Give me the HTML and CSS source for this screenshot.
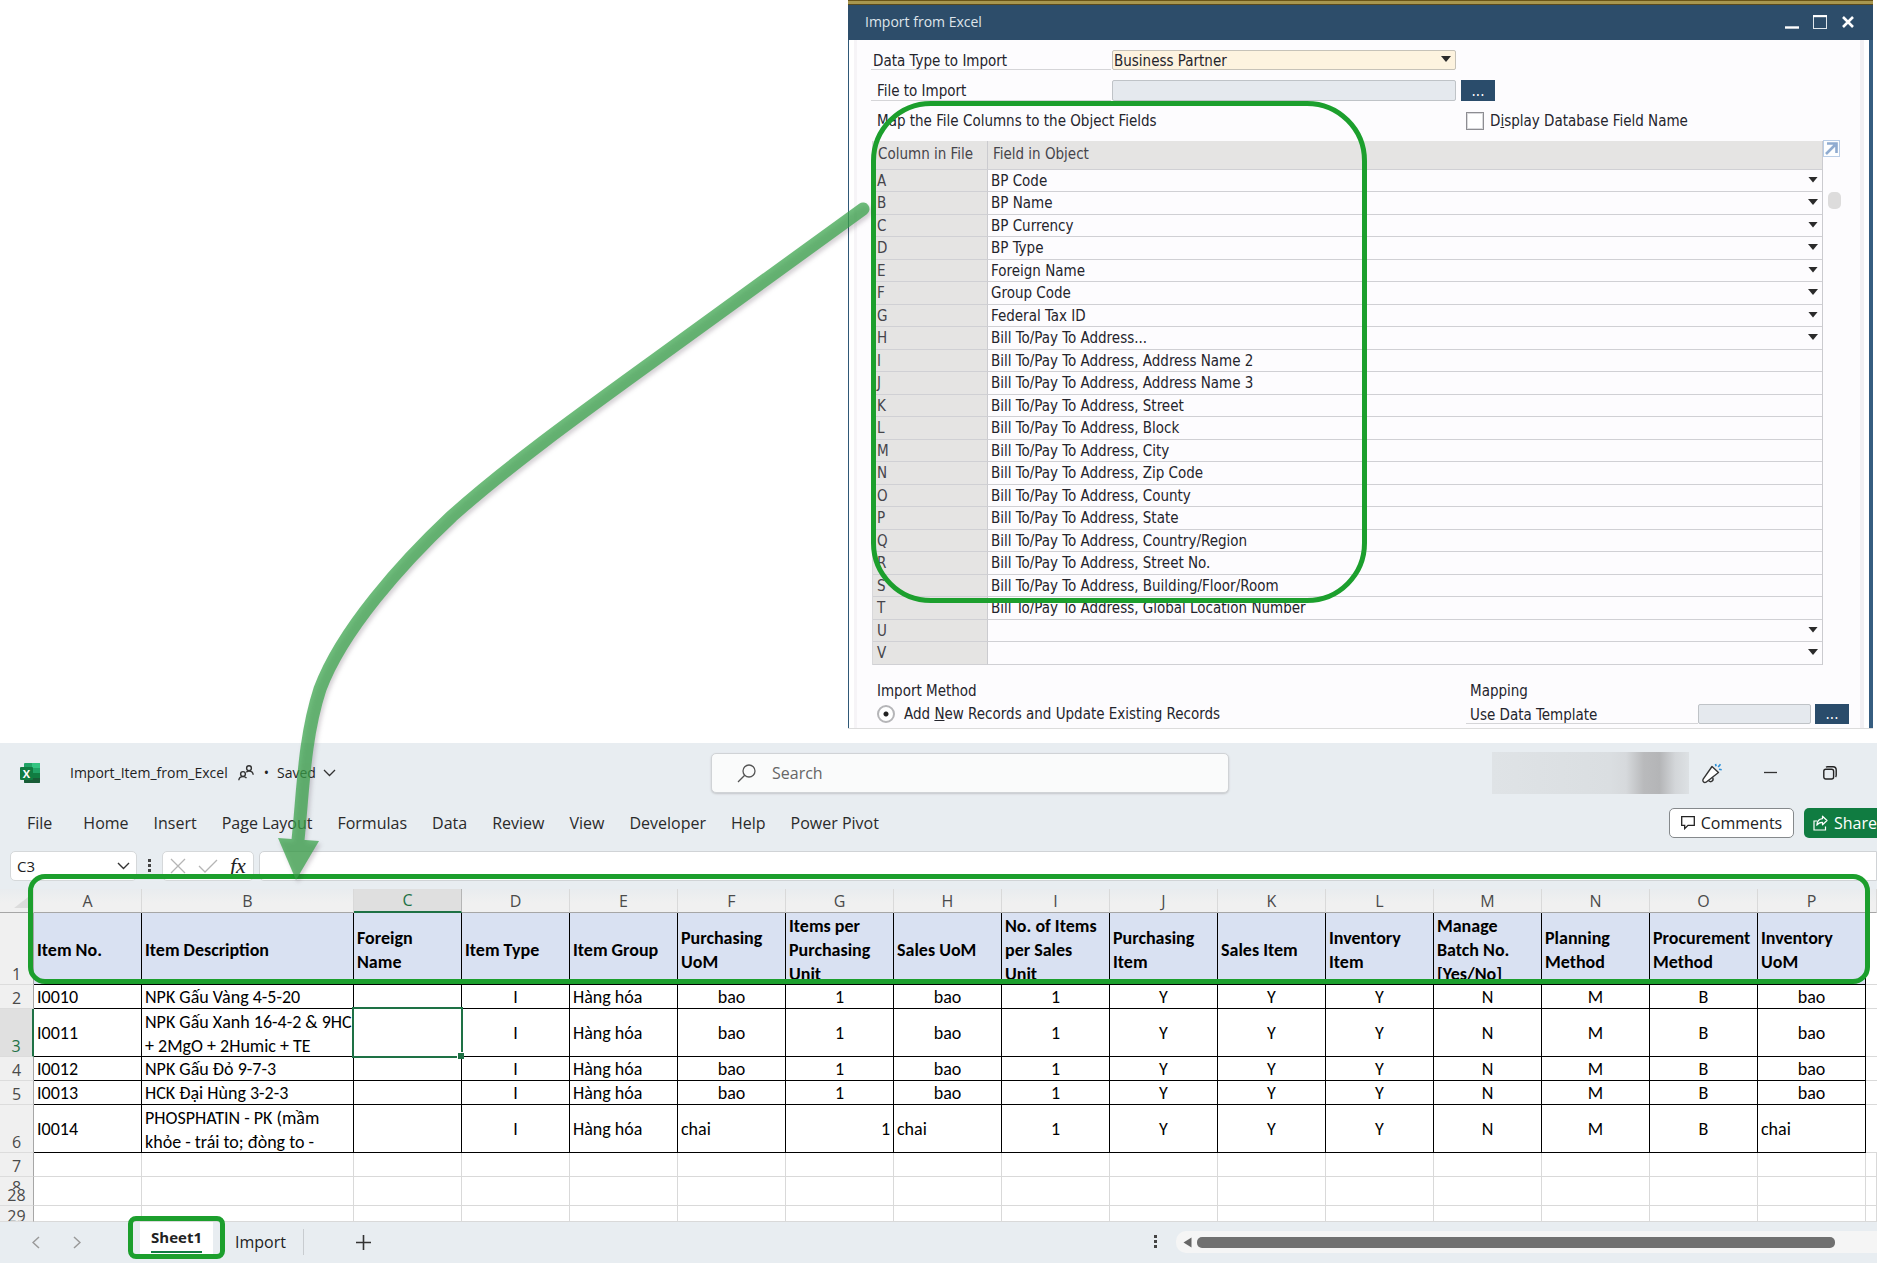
FILE: index.html
```html
<!DOCTYPE html>
<html lang="en">
<head>
<meta charset="utf-8">
<title>Import from Excel</title>
<link rel="stylesheet" href="styles.css">
</head>
<body>
<main class="page">

<section class="dialog">
  <header class="dialog-title">
    <h1>Import from Excel</h1>
    <div class="dialog-controls">
      <button type="button" aria-label="Minimize"><svg width="14" height="14" viewBox="0 0 14 14"><path d="M0 12.5h14" stroke="#fff" stroke-width="2.4"/></svg></button>
      <button type="button" aria-label="Maximize"><svg width="14" height="14" viewBox="0 0 14 14"><rect x=".5" y=".5" width="13" height="13" fill="none" stroke="#dfe6ec"/><path d="M0 1.2h14" stroke="#fff" stroke-width="2"/></svg></button>
      <button type="button" aria-label="Close"><svg width="14" height="14" viewBox="0 0 14 14"><path d="M2 2l10 10M12 2L2 12" stroke="#fff" stroke-width="2.6"/></svg></button>
    </div>
  </header>
  <div class="dialog-body">
    <div class="form-row">
      <label class="lined" for="dtype">Data Type to Import</label>
      <span class="pick boxed"><select id="dtype"><option>Business Partner</option></select><i class="caret"></i></span>
    </div>
    <div class="form-row file-row">
      <label class="lined inset" for="file">File to Import</label>
      <input class="field" id="file" type="text">
      <button class="more" type="button" aria-label="Browse file">...</button>
    </div>
    <div class="split">
      <h2>Map the File Columns to the Object Fields</h2>
      <label class="check"><input type="checkbox"><span>D<u>i</u>splay Database Field Name</span></label>
    </div>
    <div class="map-area">
      <table class="map">
        <colgroup><col class="col-file"><col></colgroup>
        <thead><tr><th>Column in File</th><th>Field in Object</th></tr></thead>
        <tbody>
          <tr><th>A</th><td><span class="pick"><select aria-label="Field A"><option>BP Code</option></select><i class="caret"></i></span></td></tr>
          <tr><th>B</th><td><span class="pick"><select aria-label="Field B"><option>BP Name</option></select><i class="caret"></i></span></td></tr>
          <tr><th>C</th><td><span class="pick"><select aria-label="Field C"><option>BP Currency</option></select><i class="caret"></i></span></td></tr>
          <tr><th>D</th><td><span class="pick"><select aria-label="Field D"><option>BP Type</option></select><i class="caret"></i></span></td></tr>
          <tr><th>E</th><td><span class="pick"><select aria-label="Field E"><option>Foreign Name</option></select><i class="caret"></i></span></td></tr>
          <tr><th>F</th><td><span class="pick"><select aria-label="Field F"><option>Group Code</option></select><i class="caret"></i></span></td></tr>
          <tr><th>G</th><td><span class="pick"><select aria-label="Field G"><option>Federal Tax ID</option></select><i class="caret"></i></span></td></tr>
          <tr><th>H</th><td><span class="pick"><select aria-label="Field H"><option>Bill To/Pay To Address...</option></select><i class="caret"></i></span></td></tr>
          <tr><th>I</th><td>Bill To/Pay To Address, Address Name 2</td></tr>
          <tr><th>J</th><td>Bill To/Pay To Address, Address Name 3</td></tr>
          <tr><th>K</th><td>Bill To/Pay To Address, Street</td></tr>
          <tr><th>L</th><td>Bill To/Pay To Address, Block</td></tr>
          <tr><th>M</th><td>Bill To/Pay To Address, City</td></tr>
          <tr><th>N</th><td>Bill To/Pay To Address, Zip Code</td></tr>
          <tr><th>O</th><td>Bill To/Pay To Address, County</td></tr>
          <tr><th>P</th><td>Bill To/Pay To Address, State</td></tr>
          <tr><th>Q</th><td>Bill To/Pay To Address, Country/Region</td></tr>
          <tr><th>R</th><td>Bill To/Pay To Address, Street No.</td></tr>
          <tr><th>S</th><td>Bill To/Pay To Address, Building/Floor/Room</td></tr>
          <tr><th>T</th><td>Bill To/Pay To Address, Global Location Number</td></tr>
          <tr><th>U</th><td><span class="pick"><select aria-label="Field U"><option></option></select><i class="caret"></i></span></td></tr>
          <tr><th>V</th><td><span class="pick"><select aria-label="Field V"><option></option></select><i class="caret"></i></span></td></tr>
        </tbody>
      </table>
      <div class="map-side">
        <button class="expand" type="button" aria-label="Expand table"><svg width="17" height="17" viewBox="0 0 17 17"><rect x=".5" y=".5" width="16" height="16" fill="#fdfeff" stroke="#b9cde6"/><path d="M3 14L12 5M4 3.500H13.500V13" fill="none" stroke="#8fabd0" stroke-width="2.6"/></svg></button>
        <div class="map-thumb"></div>
      </div>
    </div>
    <div class="split footer">
      <div class="method">
        <h2>Import Method</h2>
        <label class="radio"><input type="radio" name="method" checked><span>Add <u>N</u>ew Records and Update Existing Records</span></label>
      </div>
      <div class="mapping">
        <h2>Mapping</h2>
        <div class="template-row">
          <label class="lined" for="tpl">Use Data Template</label>
          <input class="field" id="tpl" type="text">
          <button class="more" type="button" aria-label="Browse template">...</button>
        </div>
      </div>
    </div>
  </div>
</section>

<section class="excel">
  <header class="titlebar">
    <div class="doc">
      <svg class="logo" width="20" height="20" viewBox="0 0 20 20"><rect x="4" width="16" height="20" rx="1" fill="#21a366"/><path d="M12 0h7a1 1 0 011 1v4h-8z" fill="#33c481"/><path d="M4 10h8v5H4z" fill="#185c37"/><path d="M12 5h8v5h-8z" fill="#21a366"/><path d="M12 10h8v5h-8z" fill="#107c41"/><path d="M4 15h16v4a1 1 0 01-1 1H5a1 1 0 01-1-1z" fill="#185c37"/><rect y="4" width="13" height="13" rx="1" fill="#107c41"/><text x="6.500" y="14.500" text-anchor="middle" font-family="Open Sans, sans-serif" font-weight="700" font-size="11" fill="#fff">X</text></svg>
      <span class="doc-name">Import_Item_from_Excel</span>
      <svg width="16" height="16" viewBox="0 0 16 16" fill="none" stroke="#333" stroke-width="1.400"><circle cx="5" cy="9" r="2.400"/><path d="M.8 15.300c.2-2.600 1.800-3.700 4.200-3.700 1.600 0 2.800.5 3.500 1.600"/><circle cx="11" cy="3.200" r="2.400"/><path d="M8.300 7.300c.7-.8 1.600-1.200 2.700-1.200 2.500 0 4 1.100 4.200 3.600"/></svg>
      <span class="dot">•</span>
      <span class="saved">Saved</span>
      <svg width="13" height="8" viewBox="0 0 13 8"><path d="M1 1l5.500 5.500L12 1" fill="none" stroke="#333" stroke-width="1.300"/></svg>
    </div>
    <label class="search">
      <svg width="19" height="19" viewBox="0 0 19 19" fill="none" stroke="#555" stroke-width="1.300"><circle cx="12" cy="7" r="6"/><path d="M7.700 11.300L1 18"/></svg>
      <input type="search" placeholder="Search" aria-label="Search">
    </label>
    <div class="window-tools">
      <div class="account"></div>
      <button type="button" aria-label="What's new"><svg width="21" height="21" viewBox="0 0 21 21" fill="none" stroke="#333" stroke-width="1.400" stroke-linejoin="round"><path d="M11 3.500l6.500 6L5 19.200c-1.700 1-3.800-.8-3-2.800z" fill="#fff"/><path d="M7.500 17.300c.8 1.600 2.700 1.700 3.700.8s1.100-2.300.4-3.600"/><g stroke="#2b8fd8" stroke-width="1.600"><path d="M14.500 1l.6 2.200M19.500 1.300l-2.300 2.800M18 6.300l2.700.5"/></g></svg></button>
      <button type="button" aria-label="Minimize window"><svg width="13" height="13" viewBox="0 0 13 13"><path d="M0 5.500h13" stroke="#333" stroke-width="1.300"/></svg></button>
      <button type="button" aria-label="Restore window"><svg width="14" height="14" viewBox="0 0 14 14" fill="none" stroke="#222" stroke-width="1.400"><rect x=".8" y="3.200" width="9.800" height="9.800" rx="2"/><path d="M3 1.200C3.500.9 4 .8 4.600.8H10a3.200 3.200 0 013.200 3.200v5c0 .8-.2 1.500-.6 2"/></svg></button>
    </div>
  </header>

  <div class="ribbon">
    <nav class="tabs">
      <a href="#file">File</a><a href="#home">Home</a><a href="#insert">Insert</a><a href="#layout">Page Layout</a><a href="#formulas">Formulas</a><a href="#data">Data</a><a href="#review">Review</a><a href="#view">View</a><a href="#developer">Developer</a><a href="#help">Help</a><a href="#pivot">Power Pivot</a>
    </nav>
    <div class="actions">
      <button class="comments" type="button"><svg width="14" height="14" viewBox="0 0 14 14"><path d="M.7.700h12.600v8.600H7L3.700 12.600V9.300H.7z" fill="none" stroke="#222" stroke-width="1.300"/></svg>Comments</button>
      <button class="share" type="button"><svg width="15" height="16" viewBox="0 0 15 16" fill="none" stroke="#fff" stroke-width="1.200"><path d="M4 6H1v9h11.500v-3.500"/><path d="M9.500 1.200L14 5.500 9.500 9.800V7.300C7 7.200 5.200 8 3.800 10.300 4 6.500 6 4 9.500 3.700z" stroke-linejoin="round"/></svg>Share</button>
    </div>
  </div>

  <div class="formula-bar">
    <div class="name-box"><input type="text" value="C3" aria-label="Name box"><svg width="13" height="8" viewBox="0 0 13 8"><path d="M1 1l5.500 5.500L12 1" fill="none" stroke="#333" stroke-width="1.400"/></svg></div>
    <svg class="grip" width="4" height="14" viewBox="0 0 4 14" fill="#444"><path d="M0 0h3v3H0zM0 5h3v3H0zM0 10h3v3H0z"/></svg>
    <div class="fx-box">
      <button type="button" aria-label="Cancel"><svg width="16" height="16" viewBox="0 0 16 16"><path d="M1 1l14 14M15 1L1 15" stroke="#b5b5b5" stroke-width="1.300"/></svg></button>
      <button type="button" aria-label="Enter"><svg width="20" height="14" viewBox="0 0 20 14"><path d="M1 7l6 6L19 1" fill="none" stroke="#b5b5b5" stroke-width="1.300"/></svg></button>
      <button class="fx" type="button">fx</button>
    </div>
    <input class="formula" type="text" aria-label="Formula">
  </div>

  <table class="sheet">
    <colgroup><col class="c-num"><col class="c-std"><col class="c-wide"><col class="c-std" span="14"><col></colgroup>
    <thead>
      <tr><th class="corner"><svg width="18" height="14" viewBox="0 0 18 14"><path d="M18 0v14H0z" fill="#dcdcdc"/></svg></th><th>A</th><th>B</th><th class="on">C</th><th>D</th><th>E</th><th>F</th><th>G</th><th>H</th><th>I</th><th>J</th><th>K</th><th>L</th><th>M</th><th>N</th><th>O</th><th>P</th><th></th></tr>
    </thead>
    <tbody>
      <tr class="heads"><th>1</th><td><div>Item No.</div></td><td><div>Item Description</div></td><td><div>Foreign Name</div></td><td><div>Item Type</div></td><td><div>Item Group</div></td><td><div>Purchasing UoM</div></td><td><div>Items per Purchasing Unit</div></td><td><div>Sales UoM</div></td><td><div>No. of Items per Sales Unit</div></td><td><div>Purchasing Item</div></td><td><div>Sales Item</div></td><td><div>Inventory Item</div></td><td><div>Manage Batch No. [Yes/No]</div></td><td><div>Planning Method</div></td><td><div>Procurement Method</div></td><td><div>Inventory UoM</div></td><td></td></tr>
      <tr class="data"><th>2</th><td>I0010</td><td>NPK Gấu Vàng 4-5-20</td><td></td><td class="c">I</td><td>Hàng hóa</td><td class="c">bao</td><td class="c">1</td><td class="c">bao</td><td class="c">1</td><td class="c">Y</td><td class="c">Y</td><td class="c">Y</td><td class="c">N</td><td class="c">M</td><td class="c">B</td><td class="c">bao</td><td></td></tr>
      <tr class="data tall"><th class="on">3</th><td>I0011</td><td><div>NPK Gấu Xanh 16-4-2 &amp; 9HC + 2MgO + 2Humic + TE</div></td><td class="active"></td><td class="c">I</td><td>Hàng hóa</td><td class="c">bao</td><td class="c">1</td><td class="c">bao</td><td class="c">1</td><td class="c">Y</td><td class="c">Y</td><td class="c">Y</td><td class="c">N</td><td class="c">M</td><td class="c">B</td><td class="c">bao</td><td></td></tr>
      <tr class="data"><th>4</th><td>I0012</td><td>NPK Gấu Đỏ 9-7-3</td><td></td><td class="c">I</td><td>Hàng hóa</td><td class="c">bao</td><td class="c">1</td><td class="c">bao</td><td class="c">1</td><td class="c">Y</td><td class="c">Y</td><td class="c">Y</td><td class="c">N</td><td class="c">M</td><td class="c">B</td><td class="c">bao</td><td></td></tr>
      <tr class="data"><th>5</th><td>I0013</td><td>HCK Đại Hùng 3-2-3</td><td></td><td class="c">I</td><td>Hàng hóa</td><td class="c">bao</td><td class="c">1</td><td class="c">bao</td><td class="c">1</td><td class="c">Y</td><td class="c">Y</td><td class="c">Y</td><td class="c">N</td><td class="c">M</td><td class="c">B</td><td class="c">bao</td><td></td></tr>
      <tr class="data tall"><th>6</th><td>I0014</td><td><div>PHOSPHATIN - PK (mầm khỏe - trái to; đòng to -</div></td><td></td><td class="c">I</td><td>Hàng hóa</td><td>chai</td><td class="r">1</td><td>chai</td><td class="c">1</td><td class="c">Y</td><td class="c">Y</td><td class="c">Y</td><td class="c">N</td><td class="c">M</td><td class="c">B</td><td>chai</td><td></td></tr>
      <tr class="blank"><th>7</th><td></td><td></td><td></td><td></td><td></td><td></td><td></td><td></td><td></td><td></td><td></td><td></td><td></td><td></td><td></td><td></td><td></td></tr>
      <tr class="blank joined"><th><div class="cut-low">8</div><div class="cut-high">28</div></th><td></td><td></td><td></td><td></td><td></td><td></td><td></td><td></td><td></td><td></td><td></td><td></td><td></td><td></td><td></td><td></td><td></td></tr>
      <tr class="blank last"><th><div class="cut-end">29</div></th><td></td><td></td><td></td><td></td><td></td><td></td><td></td><td></td><td></td><td></td><td></td><td></td><td></td><td></td><td></td><td></td><td></td></tr>
    </tbody>
  </table>

  <footer class="sheet-bar">
    <button class="nav" type="button" aria-label="Previous sheet"><svg width="8" height="13" viewBox="0 0 8 13"><path d="M7 1L1 6.500 7 12" fill="none" stroke="#999" stroke-width="1.500"/></svg></button>
    <button class="nav" type="button" aria-label="Next sheet"><svg width="8" height="13" viewBox="0 0 8 13"><path d="M1 1l6 5.500L1 12" fill="none" stroke="#999" stroke-width="1.500"/></svg></button>
    <button class="sheet-tab current" type="button"><span>Sheet1</span></button>
    <button class="sheet-tab" type="button">Import</button>
    <button class="add" type="button" aria-label="New sheet"><svg width="15" height="15" viewBox="0 0 15 15"><path d="M7.500 0v15M0 7.500h15" stroke="#333" stroke-width="1.600"/></svg></button>
    <svg class="grip" width="4" height="14" viewBox="0 0 4 14" fill="#444"><path d="M0 0h3v3H0zM0 5h3v3H0zM0 10h3v3H0z"/></svg>
    <div class="scroll"><svg width="9" height="11" viewBox="0 0 9 11"><path d="M8.500 .5v10L.5 5.500z" fill="#666"/></svg><div class="thumb"></div></div>
  </footer>
</section>

<div class="ring ring-map"></div>
<div class="ring ring-heads"></div>
<div class="ring ring-tab"></div>
<svg class="arrow" width="640" height="720" viewBox="0 0 640 720">
  <g opacity=".72" stroke="#38a349" fill="#38a349">
    <path d="M603 29L403 174C330 227 250 284 192 336C142 383 82 450 60 509C44 558 43 612 38 660" fill="none" stroke-width="13" stroke-linecap="round"/>
    <path d="M18 658L59 661L36 700Z" stroke="none"/>
  </g>
</svg>
</main>
</body>
</html>
```

FILE: styles.css
```css
* { box-sizing: border-box; }
body { margin: 0; background: #fff; color: #222; font-family: "Open Sans", "Noto Sans", sans-serif; font-size: 16px; }
.page { position: relative; overflow: hidden; }
button, input, select { font: inherit; color: inherit; margin: 0; padding: 0; border: 0; background: none; border-radius: 0; }
button svg, label svg { display: block; flex: none; }
h1, h2 { margin: 0; font-size: inherit; font-weight: 400; }

/* import dialog */
.dialog { margin: 0 4px 15px 848px; padding-top: 5px; font: 15px/20px "DejaVu Sans Condensed", "Noto Sans", sans-serif; color: #24242c; background: linear-gradient(#6b5518 0 1px, #a8974f 1px 4px, #5b4a1c 4px 5px, #fff 5px); }
.dialog-title { height: 35px; padding: 0 18px 2px 17px; display: flex; align-items: center; justify-content: space-between; background: #2d4d6a; color: #dfe5ea; font: 14px/20px "Open Sans", sans-serif; }
.dialog-controls { display: flex; gap: 14px; }
.dialog-body { padding: 10px 0 4px 23px; border: solid #2f5877; border-width: 0 4px 0 1px; border-right-color: #365d80; box-shadow: 0 1px 0 #dcdcdc; background: linear-gradient(90deg, #fff 5px, #f6f4f7 5px, #f6f4f7 8px, #fdfcfe 8px, #fdfcfe calc(100% - 9px), #f2f0f3 calc(100% - 9px), #f2f0f3 calc(100% - 5px), #fff 0); }
.form-row { display: flex; height: 20px; margin-bottom: 10px; }
.form-row > .lined { flex: 0 0 240px; margin-left: -1px; padding-left: 2px; }
.form-row > .lined + * { width: 344px; margin-left: 1px; }
.lined { line-height: 22px; border-bottom: 1px solid #d5d5d8; }
.file-row { height: 21px; margin-bottom: 11px; }
.file-row > .inset { padding-left: 6px; }
.pick { display: grid; align-items: center; }
.pick > * { grid-area: 1 / 1; }
.pick select { appearance: none; width: 100%; height: 20px; }
.pick .caret { justify-self: end; margin: 0 4px 2px 0; width: 10px; height: 6px; background: #2b2b2b; clip-path: polygon(0 0, 100% 0, 50% 100%); pointer-events: none; }
.boxed { background: #fdf3df; border: 1px solid #c6c2b8; border-radius: 2px; }
.boxed select { height: 18px; padding-left: 1px; }
.field { background: #e5e9ee; border: 1px solid #bfc3c7; border-radius: 2px; min-width: 0; }
.more { width: 34px; margin-left: 5px; background: #2a4c6b; color: #fff; line-height: 18px; }
.split { display: grid; grid-template-columns: 594px 1fr; }
.split h2 { padding-left: 5px; line-height: 18px; }
.check { display: flex; gap: 6px; line-height: 18px; }
.check input { appearance: none; width: 18px; height: 18px; border: 1px solid #8d8d92; outline: 1px solid #d9d9dc; outline-offset: -2px; background: #fff; }
.map-area { display: flex; margin-top: 11px; }
.map { flex: 1; table-layout: fixed; border-collapse: separate; border-spacing: 0; border-right: 1px solid #cbcbcf; border-left: 1px solid #d8d8da; }
.col-file { width: 115px; }
.map th, .map td { padding: 0 0 0 3px; height: 22px; line-height: 20px; text-align: left; font-weight: 400; border-bottom: 1px solid #d0d0d4; vertical-align: middle; }
.map tbody tr:nth-child(even) > * { height: 23px; }
.map tbody th { background: #e5e4e3; border-right: 1px solid #cbcbcf; padding-left: 4px; color: #45454b; }
.map thead th { height: 29px; background: #e5e4e3; color: #45454b; padding: 0 0 3px 5px; }
.map thead th:first-child { border-right: 1px solid #cbcbcf; }
.map-side { flex: 0 0 46px; }
.expand { display: block; margin-top: -1px; }
.map-thumb { width: 13px; height: 17px; margin: 35px 0 0 5px; border-radius: 5px; background: #dddcdc; }
.footer { margin-top: 16px; }
.footer h2 { line-height: 20px; margin-bottom: 3px; }
.radio { display: flex; gap: 9px; padding-left: 5px; line-height: 20px; }
.radio input { appearance: none; width: 18px; height: 18px; margin-top: 1px; border: 2px solid #b5b5b8; border-radius: 50%; background: radial-gradient(circle, #222 0 2px, #fff 3px); }
.template-row { display: flex; height: 20px; margin-right: 20px; }
.template-row .lined { flex: 1; padding-left: 4px; }
.template-row .field { width: 113px; }
.template-row .more { width: 34px; margin-left: 4px; }
.mapping h2 { padding-left: 4px; }

/* spreadsheet window */
.excel { background: #e8edf1; overflow: hidden; }
.titlebar { display: grid; grid-template-columns: 711fr 518fr 648fr; align-items: center; height: 60px; }
.doc { display: flex; align-items: center; padding-left: 20px; font-size: 14px; line-height: 20px; white-space: nowrap; }
.doc-name { margin: 0 10px 0 30px; }
.dot { margin: 0 8px 0 10px; }
.saved { margin-right: 7px; }
.search { display: flex; align-items: center; gap: 16px; height: 40px; padding-left: 25px; background: #fafbfb; border: 1px solid #d0d3d6; border-radius: 5px; box-shadow: 0 1px 2px #c4c7ca; }
.search input { flex: 1; min-width: 0; outline: 0; }
.search input::placeholder { color: #666; opacity: 1; }
.window-tools { display: flex; align-items: center; justify-content: flex-end; padding-right: 40px; }
.account { width: 197px; height: 42px; margin-right: 12px; background: linear-gradient(90deg, #dfe3e6, #dadee1 60%, #d6d9dc 68%, #b9babc 77%, #b4b5b7 85%, #d3d6d9 93%, #dde1e4); }
.window-tools button + button { margin-left: 42px; }
.window-tools button:last-child { margin-left: 46px; }
.ribbon { display: flex; justify-content: space-between; align-items: center; height: 40px; margin-right: -14px; white-space: nowrap; }
.tabs { display: flex; gap: 25px; padding-left: 27px; }
.tabs a { color: #2a2a2a; text-decoration: none; line-height: 24px; }
.tabs a:first-child { margin-right: 6px; }
.actions { display: flex; gap: 10px; }
.actions button { display: flex; align-items: center; justify-content: center; gap: 6px; height: 30px; border-radius: 5px; line-height: 24px; }
.comments { width: 125px; background: #fff; border: 1px solid #85898c; }
.share { width: 87px; padding-right: 5px; background: #107c41; color: #fff; }
.formula-bar { display: flex; align-items: center; height: 30px; margin: 8px 0; padding-left: 10px; }
.name-box { display: flex; align-items: center; width: 127px; height: 30px; padding: 0 6px; background: #fff; border: 1px solid #d5d8da; border-radius: 5px; font-size: 15px; }
.name-box input { flex: 1; min-width: 0; }
.formula-bar .grip { margin: 0 10px 0 11px; }
.fx-box { display: flex; align-items: center; width: 92px; height: 30px; padding-left: 7px; gap: 12px; background: #fff; border: 1px solid #d5d8da; border-radius: 5px; }
.fx { font: italic 22px/24px "Liberation Serif", serif; }
.formula { flex: 1; height: 30px; margin-left: 5px; background: #fff; border: 1px solid #d0d3d6; border-radius: 5px 0 0 5px; }

.sheet { width: 100%; table-layout: fixed; border-collapse: separate; border-spacing: 0; background: #fff; font: 18px/22px Calibri, Carlito, Lato, sans-serif; color: #000; }
.c-num { width: 34px; }
.c-std { width: 108px; }
.c-wide { width: 212px; }
.sheet th, .sheet td { padding: 0; overflow: hidden; vertical-align: middle; }
.sheet th { font: 16px/20px "Open Sans", sans-serif; color: #4a4a4a; text-align: center; }
.sheet thead th { height: 24px; background: linear-gradient(#e9ecef, #f0f0f0 60%); border-bottom: 1px solid #a6a6a6; border-right: 1px solid #d9d9d9; }
.sheet thead .on { background: #dfdfdf; color: #1e7145; border-bottom: 2px solid #1e7145; border-right-color: #b5b5b5; }
.sheet .corner svg { display: block; margin-left: 14px; }
.sheet tbody th { background: #f0f0f0; border-right: 1px solid #a6a6a6; border-bottom: 1px solid #dcdcdc; vertical-align: bottom; }
.sheet tbody .on { background: #e0e0e0; color: #1e7145; border-right: 2px solid #1e7145; }
.sheet td { height: 24px; padding: 1px 3px 0; border-right: 1px solid #d9d9d9; border-bottom: 1px solid #d9d9d9; }
.heads td:not(:last-child), .data td:not(:last-child) { border-color: #000; }
.heads td:last-child, .data td:last-child { border-right: 0; }
.heads td { height: 72px; font-weight: 700; }
.heads td:not(:last-child) { background: #d9e1f2; }
.sheet td div { line-height: 24px; margin-bottom: -2px; }
.sheet .tall div { margin-right: -3px; }
.tall td { height: 48px; }
.sheet .c { text-align: center; }
.sheet .r { text-align: right; }
.sheet .active { position: relative; overflow: visible; }
.active::before { content: ""; position: absolute; inset: -2px; border: 2px solid #1e7145; }
.active::after { content: ""; position: absolute; right: -3px; bottom: -3px; width: 6px; height: 6px; background: #1e7145; border: solid #fff; border-width: 1px 0 0 1px; }
.joined td { height: 29px; }
.cut-low { height: 12px; overflow: hidden; }
.cut-high { height: 16px; line-height: 12px; }
.cut-end { height: 15px; overflow: hidden; }
.last td { height: 16px; }

.sheet-bar { display: flex; align-items: center; height: 40px; margin-bottom: 2px; padding-left: 32px; }
.nav { margin-right: 33px; }
.sheet-tab { height: 26px; padding: 0 17px; border-right: 1px solid #c8ccd0; line-height: 24px; }
.current { align-self: flex-start; height: 32px; width: 73px; margin: 0 5px 0 26px; padding: 0; background: #fff; border: 0; font-weight: 700; font-size: 15px; }
.current span { display: inline-block; border-bottom: 2px solid #107c41; line-height: 27px; }
.add { margin-left: 52px; }
.sheet-bar .grip { margin-left: auto; }
.scroll { display: flex; align-items: center; width: 701px; height: 22px; margin-left: 18px; padding-left: 7px; gap: 5px; background: #f5f5f5; border-radius: 10px 0 0 10px; }
.thumb { width: 638px; height: 11px; border-radius: 5px; background: #707070; }

/* callouts drawn over both windows */
.ring { position: absolute; border: 5px solid #1c9f2d; pointer-events: none; }
.ring-map { left: 871px; top: 101px; width: 496px; height: 502px; border-radius: 60px; }
.ring-heads { left: 28px; right: 7px; top: 874px; height: 110px; border-radius: 17px; }
.ring-tab { left: 128px; top: 1216px; width: 97px; height: 43px; border-radius: 8px; }
.arrow { position: absolute; left: 260px; top: 180px; filter: drop-shadow(2px 3px 2px rgba(60, 40, 60, .3)); pointer-events: none; }
```
